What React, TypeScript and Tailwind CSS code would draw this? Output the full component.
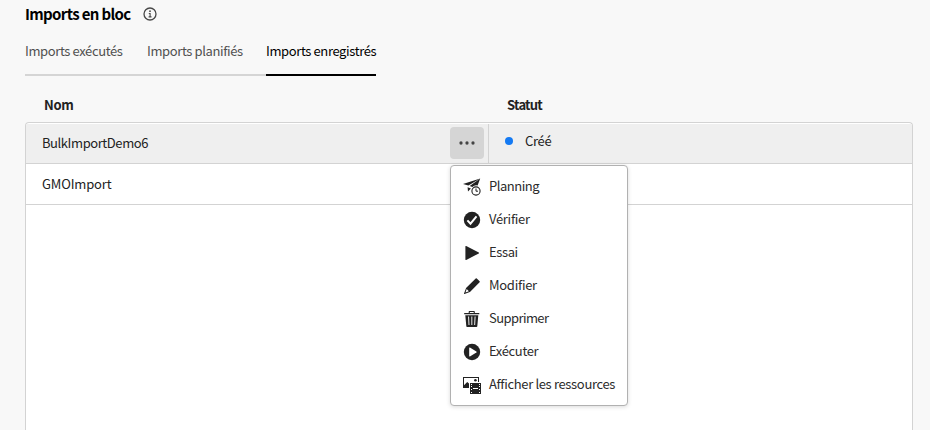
import type { ReactNode } from "react";

const ink = "#222222";

function Info() {
  return (
    <svg width="14" height="14" viewBox="0 0 14 14" fill="none" stroke="#484848">
      <circle cx="7" cy="7" r="6" strokeWidth="1.3" />
      <circle cx="7" cy="4.2" r=".9" fill="#484848" stroke="none" />
      <path d="M5.8 6.5h1.3v3.2M5.6 9.9h2.9" strokeWidth="1.1" />
    </svg>
  );
}

function Icon({ children }: { children: ReactNode }) {
  return (
    <svg width="18" height="18" viewBox="0 0 18 18" fill={ink} className="shrink-0">
      {children}
    </svg>
  );
}

const items: { label: string; tracking: string; icon: ReactNode }[] = [
  {
    label: "Planning",
    tracking: "tracking-[-0.48px]",
    icon: (
      <Icon>
        <path d="M0 6 17.2.6 5.4 7.4ZM17.2.6 14.6 7.5A5.5 5.5 0 0 0 9.4 8.9L6.7 8.1ZM4.6 9.2 7.9 10.4 5 13.4Z" />
        <circle cx="13" cy="13" r="4.1" fill="none" stroke={ink} strokeWidth="1.1" />
        <path d="M13 10.5v2.7h2" fill="none" stroke={ink} />
      </Icon>
    ),
  },
  {
    label: "Vérifier",
    tracking: "tracking-[-0.3px]",
    icon: (
      <Icon>
        <circle cx="9" cy="9" r="8.2" />
        <path d="m4.4 9.3 3.1 3.4 6-7.4" fill="none" stroke="white" strokeWidth="2" />
      </Icon>
    ),
  },
  {
    label: "Essai",
    tracking: "tracking-[-0.4px]",
    icon: (
      <Icon>
        <path d="M2.4 2.4v13.2a.5.5 0 0 0 .8.4L15.8 9.4a.5.5 0 0 0 0-.8L3.2 2a.5.5 0 0 0-.8.4Z" />
      </Icon>
    ),
  },
  {
    label: "Modifier",
    tracking: "tracking-[-0.28px]",
    icon: (
      <Icon>
        <path d="M16.6 4.2 13.8 1.4a.8.8 0 0 0-1.1 0L3.3 10.8a1 1 0 0 0-.3.4L1 16.5a.4.4 0 0 0 .5.5l5.3-2a1 1 0 0 0 .4-.3l9.4-9.4a.8.8 0 0 0 0-1.1ZM2.5 15.5l1.2-3.4 2.2 2.2Z" />
      </Icon>
    ),
  },
  {
    label: "Supprimer",
    tracking: "tracking-[-0.58px]",
    icon: (
      <Icon>
        <path d="M1.2 3h4.5V1.7a.7.7 0 0 1 .7-.7h4.7a.7.7 0 0 1 .7.7V3h4.5v1.3H1.2ZM6.8 2v1h3.9V2ZM2.3 5.3h13l-1 11a.8.8 0 0 1-.8.7H4.1a.8.8 0 0 1-.8-.7Z" fillRule="evenodd" />
        <path d="m5.5 6.5.5 8.5M8.8 6.5V15M12.1 6.5l-.5 8.5" stroke="#d8d8d8" strokeWidth="1.1" />
      </Icon>
    ),
  },
  {
    label: "Exécuter",
    tracking: "tracking-[-0.35px]",
    icon: (
      <Icon>
        <circle cx="9" cy="9" r="8.2" />
        <path d="M6.2 4.9v8.2c0 .4.3.6.7.4l6.5-4c.4-.3.4-.7 0-1l-6.5-4c-.4-.2-.7 0-.7.4Z" fill="white" />
      </Icon>
    ),
  },
  {
    label: "Afficher les ressources",
    tracking: "tracking-[-0.34px]",
    icon: (
      <Icon>
        <path d="M0 1h16v5h-1V2H1v7.2L4.2 6 6 7.6V12H0Z" />
        <circle cx="12.4" cy="4.3" r="1.3" />
        <path d="M7 7h11v11H7Z" />
        <path d="M8 8h1v1H8ZM8 10h1v1H8ZM8 13h1v1H8ZM8 16h1v1H8ZM16 8h1v1h-1ZM16 10h1v1h-1ZM16 13h1v1h-1ZM16 16h1v1h-1ZM10 12h5v1h-5Z" fill="white" />
      </Icon>
    ),
  },
];

function ActionMenu() {
  return (
    <ul className="absolute top-[38px] left-0 z-10 flex h-[241px] w-[178px] flex-col rounded-[4px] border border-[#b1b1b1] bg-white pt-1 shadow-[0_1px_4px_rgba(0,0,0,0.15)]">
      {items.map((item) => (
        <li key={item.label} className="flex h-[33px] items-start gap-2 pt-2 pl-3 text-[#2c2c2c]">
          {item.icon}
          <span className={`-mt-px leading-[18px] whitespace-nowrap ${item.tracking}`}>{item.label}</span>
        </li>
      ))}
    </ul>
  );
}

export default function App() {
  return (
    <main className="flex h-[430px] w-[930px] flex-col overflow-hidden bg-[#f8f8f8] pr-[17px] pl-[25px] font-['Noto_Sans_CJK_SC','Open_Sans',sans-serif] text-[13px] text-[#222222]">
      <header className="flex h-7 shrink-0 items-center gap-3">
        <h1 className="w-[106px] text-[15px] leading-7 font-bold tracking-[-0.66px] whitespace-nowrap text-black">Imports en bloc</h1>
        <Info />
      </header>
      <nav className="flex h-12 shrink-0 leading-[45px] tracking-[-0.38px] whitespace-nowrap text-[#505050]">
        <span className="w-[121px] border-b-2 border-[#d5d5d5]">Imports exécutés</span>
        <span className="w-[120px] border-b-2 border-[#d5d5d5] pl-px">Imports planifiés</span>
        <span className="w-[110px] border-b-2 border-black text-black">Imports enregistrés</span>
      </nav>
      <div className="mt-[13px] flex h-[33px] shrink-0 leading-[31px] font-bold">
        <span className="w-[463px] pl-[19px] tracking-[-0.3px]">Nom</span>
        <span className="pl-[19px] tracking-[-0.75px]">Statut</span>
      </div>
      <section className="flex min-h-0 flex-1 flex-col rounded-t-[4px] border border-b-0 border-[#d3d3d3] bg-white">
        <div className="mt-px flex h-10 shrink-0 border-b border-[#d3d3d3] bg-[#efefef]">
          <div className="flex w-[463px] items-start justify-between border-r border-[#d3d3d3] pt-[3px] pr-1 pl-4">
            <span className="leading-8 tracking-[-0.42px]">BulkImportDemo6</span>
            <div className="relative h-8 w-[34px]">
              <button aria-label="Actions" className="flex h-8 w-[34px] items-center justify-center rounded-[4px] bg-[#d5d5d5]">
                <svg width="18" height="18" viewBox="0 0 18 18" fill="#444444">
                  <circle cx="3" cy="9" r="1.65" />
                  <circle cx="9" cy="9" r="1.65" />
                  <circle cx="15" cy="9" r="1.65" />
                </svg>
              </button>
              <ActionMenu />
            </div>
          </div>
          <div className="flex h-[34px] items-center gap-3 pl-4">
            <i className="size-2 rounded-full bg-[#147af3]" />
            <span className="leading-5 tracking-[-0.3px]">Créé</span>
          </div>
        </div>
        <div className="flex h-[41px] shrink-0 items-center border-b border-[#d3d3d3] pl-4 tracking-[-0.17px]">GMOImport</div>
      </section>
    </main>
  );
}
